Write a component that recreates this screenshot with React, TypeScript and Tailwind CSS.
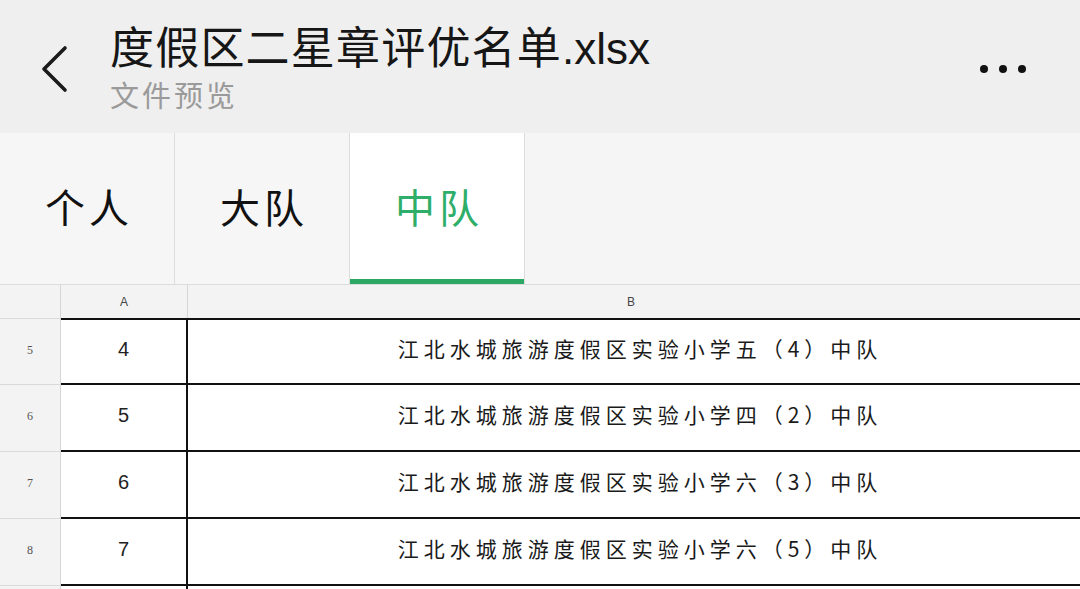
const CJK = "font-['Noto_Sans_CJK_SC',sans-serif]"

const TABS = ["个人", "大队", "中队"]
const ACTIVE_TAB = 2

const ROWS = [
  { n: "5", a: "4", b: "江北水城旅游度假区实验小学五（4）中队" },
  { n: "6", a: "5", b: "江北水城旅游度假区实验小学四（2）中队" },
  { n: "7", a: "6", b: "江北水城旅游度假区实验小学六（3）中队" },
  { n: "8", a: "7", b: "江北水城旅游度假区实验小学六（5）中队" },
  { n: "", a: "", b: "" },
]

const Header = () => (
  <div className="flex items-center h-[133px] bg-[#efefef] shrink-0">
    {/* back chevron */}
    <div className="w-[110px] flex justify-start pl-[38px] pt-[4px]">
      <svg width="32" height="48" viewBox="0 0 32 48" fill="none">
        <path d="M27 3 L6 24 L27 45" stroke="#1a1a1a" strokeWidth="3.6" strokeLinecap="round" strokeLinejoin="round" />
      </svg>
    </div>
    <div className={`flex flex-col flex-1 ${CJK}`}>
      <div className="text-[44px] leading-[52px] text-[#161616] tracking-[1.2px] -mt-[2px]">
        度假区二星章评优名单<span className="font-['Liberation_Sans',sans-serif] tracking-normal">.xlsx</span>
      </div>
      <div className="text-[29px] leading-[36px] text-[#9a9a9a] mt-[1px] tracking-[3px]">文件预览</div>
    </div>
    {/* more dots */}
    <div className="flex gap-[11px] pr-[54px] pt-[4px]">
      <span className="w-[8px] h-[8px] rounded-full bg-[#111]" />
      <span className="w-[8px] h-[8px] rounded-full bg-[#111]" />
      <span className="w-[8px] h-[8px] rounded-full bg-[#111]" />
    </div>
  </div>
)

const Tabs = () => (
  <div className="flex h-[152px] bg-[#f5f5f5] border-b border-[#dcdcdc] shrink-0">
    {TABS.map((t, i) => {
      const active = i === ACTIVE_TAB
      return (
        <div
          key={t}
          className={`w-[175px] shrink-0 flex items-center justify-center border-r border-[#dddddd] relative ${active ? "bg-white" : "bg-[#f6f6f6]"}`}
        >
          <span className={`${CJK} text-[40px] tracking-[4px] pl-[4px] -mt-[6px] ${active ? "text-[#2fae6a]" : "text-[#111]"}`}>{t}</span>
          {active && <div className="absolute left-0 right-0 bottom-0 h-[5px] bg-[#2aa864]" />}
        </div>
      )
    })}
    <div className="flex-1" />
  </div>
)

const Sheet = () => (
  <div className="grid grid-cols-[61px_127px_1fr] bg-white">
    {/* column header row */}
    <div className="h-[33px] bg-[#f3f3f3] border-r border-[#d6d6d6]" />
    <div className="h-[33px] bg-[#f3f3f3] border-r border-[#d6d6d6] flex items-center justify-center text-[12px] text-[#444] font-['Liberation_Sans',sans-serif]">A</div>
    <div className="h-[33px] bg-[#f3f3f3] flex items-center justify-center text-[12px] text-[#444] font-['Liberation_Sans',sans-serif] pr-[6px]">B</div>

    {ROWS.map((r, idx) => (
      <div key={idx} className="contents">
        <div className={`h-[67px] bg-[#f3f3f3] border-r border-[#d6d6d6] border-b border-b-[#dadada] flex items-center justify-center text-[12px] text-[#555] font-['Liberation_Serif',serif] pb-[4px] ${idx === 0 ? "border-t border-t-[#dadada]" : ""}`}>
          {r.n}
        </div>
        <div className={`h-[67px] border-r-2 border-r-[#111] border-b-2 border-b-[#111] flex items-center justify-center text-[20px] text-[#222] font-['Liberation_Sans',sans-serif] pb-[6px] ${idx === 0 ? "border-t-2 border-t-[#111]" : ""}`}>
          {r.a}
        </div>
        <div className={`h-[67px] border-b-2 border-b-[#111] flex items-center justify-center pl-[12px] pb-[6px] ${CJK} text-[21px] tracking-[5px] text-[#1a1a1a] ${idx === 0 ? "border-t-2 border-t-[#111]" : ""}`}>
          {r.b}
        </div>
      </div>
    ))}
  </div>
)

export default function App() {
  return (
    <div className="w-[1080px] h-[589px] overflow-hidden flex flex-col bg-white">
      <Header />
      <Tabs />
      <Sheet />
    </div>
  )
}
